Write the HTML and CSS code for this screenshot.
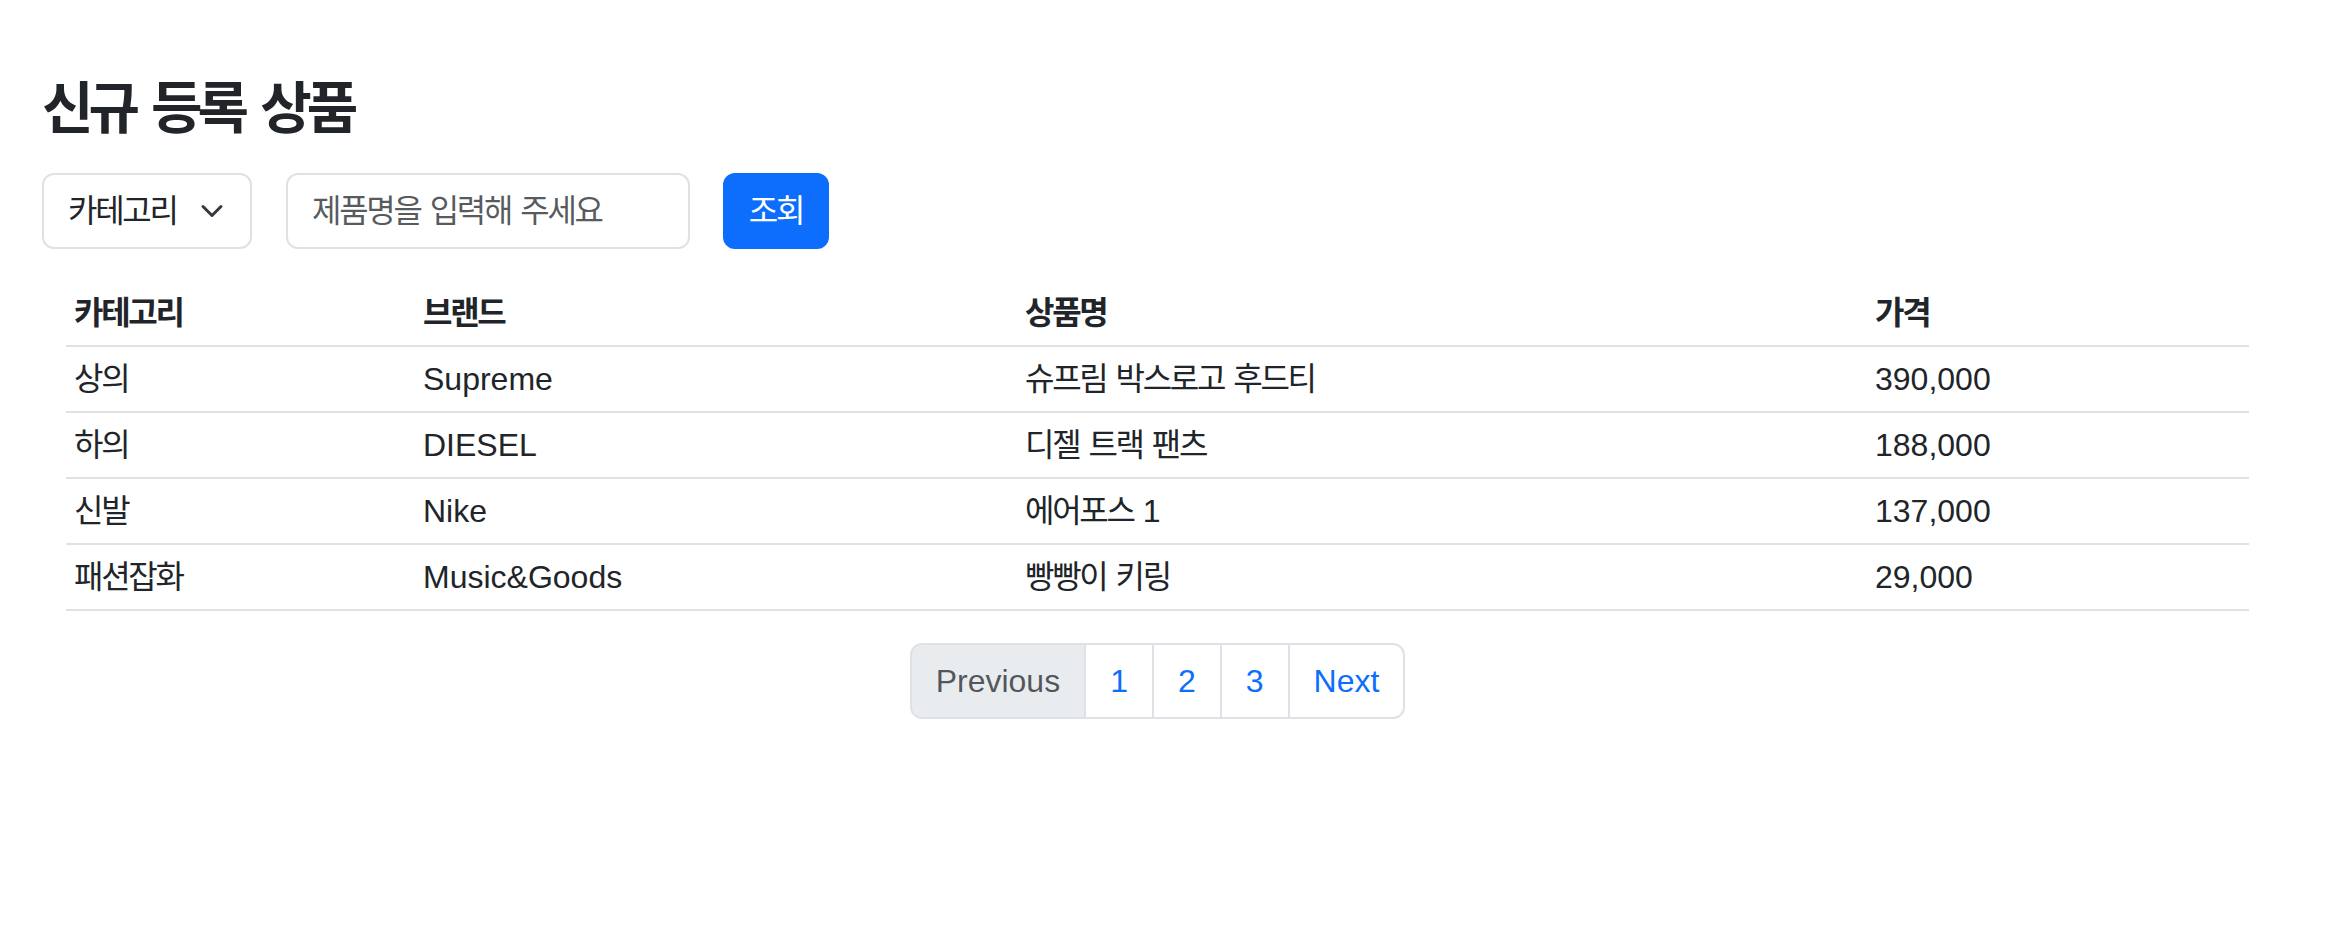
FILE: index.html
```html
<!DOCTYPE html>
<html lang="ko">
<head>
<meta charset="utf-8">
<title>신규 등록 상품</title>
<link rel="stylesheet" href="styles.css">
</head>
<body>
<main class="page">
  <h3 class="title ko">신규 등록 상품</h3>
  <form class="filters">
    <div class="select-wrap">
      <select class="select ko"><option>카테고리</option></select>
      <svg class="chevron" viewBox="0 0 16 16" width="32" height="24" preserveAspectRatio="xMidYMid meet"><path fill="none" stroke="#343a40" stroke-linecap="round" stroke-linejoin="round" stroke-width="2" d="m2 5 6 6 6-6"/></svg>
    </div>
    <input class="search ko" type="text" placeholder="제품명을 입력해 주세요">
    <button class="btn ko" type="button">조회</button>
  </form>
  <div class="table-wrap">
    <table class="table">
      <colgroup>
        <col class="c1"><col class="c2"><col class="c3"><col class="c4">
      </colgroup>
      <thead>
        <tr><th class="ko">카테고리</th><th class="ko">브랜드</th><th class="ko">상품명</th><th class="ko">가격</th></tr>
      </thead>
      <tbody>
        <tr><td class="ko">상의</td><td>Supreme</td><td class="ko">슈프림 박스로고 후드티</td><td>390,000</td></tr>
        <tr><td class="ko">하의</td><td>DIESEL</td><td class="ko">디젤 트랙 팬츠</td><td>188,000</td></tr>
        <tr><td class="ko">신발</td><td>Nike</td><td class="ko">에어포스 1</td><td>137,000</td></tr>
        <tr><td class="ko">패션잡화</td><td>Music&amp;Goods</td><td class="ko">빵빵이 키링</td><td>29,000</td></tr>
      </tbody>
    </table>
    <nav class="pager">
      <ul class="pagination">
        <li class="page-item disabled"><span class="page-link">Previous</span></li>
        <li class="page-item"><a class="page-link" href="#">1</a></li>
        <li class="page-item"><a class="page-link" href="#">2</a></li>
        <li class="page-item"><a class="page-link" href="#">3</a></li>
        <li class="page-item"><a class="page-link" href="#">Next</a></li>
      </ul>
    </nav>
  </div>
</main>
</body>
</html>
```
FILE: styles.css
```css
* { box-sizing: border-box; }

html, body {
  margin: 0;
  padding: 0;
  background: #fff;
}

body {
  font-family: "Liberation Sans", "Noto Sans CJK KR", sans-serif;
  font-size: 32px;
  line-height: 1.5;
  color: #212529;
}

.ko {
  letter-spacing: -0.072em;
  word-spacing: 0.08em;
}

.page {
  padding: 75px 42px 0 42px;
}

.title {
  margin: 0 0 31px 0;
  font-size: 56px;
  line-height: 1.2;
  font-weight: 700;
  color: #212529;
}

.title.ko {
  letter-spacing: -0.09em;
  word-spacing: 0.1em;
}

.filters {
  display: flex;
  align-items: center;
  margin: 0 0 32px 0;
}

.select-wrap {
  position: relative;
  width: 210px;
  height: 76px;
  margin-right: 34px;
}

.select {
  appearance: none;
  -webkit-appearance: none;
  width: 100%;
  height: 76px;
  padding: 12px 72px 12px 24px;
  font-family: inherit;
  font-size: 32px;
  line-height: 48px;
  color: #212529;
  background: #fff;
  border: 2px solid #dee2e6;
  border-radius: 12px;
}

.chevron {
  position: absolute;
  right: 24px;
  top: 26px;
  width: 32px;
  height: 24px;
}

.search {
  width: 404px;
  height: 76px;
  margin: 0 33px 0 0;
  padding: 12px 24px;
  font-family: inherit;
  font-size: 32px;
  line-height: 48px;
  color: #212529;
  background: #fff;
  border: 2px solid #dee2e6;
  border-radius: 12px;
  outline: none;
}

.search::placeholder {
  color: rgba(33, 37, 41, 0.75);
  letter-spacing: -0.072em;
  word-spacing: 0.08em;
}

.btn {
  width: 106px;
  height: 76px;
  padding: 12px 0;
  font-family: inherit;
  font-size: 32px;
  line-height: 48px;
  color: #fff;
  background: #0d6efd;
  border: 2px solid #0d6efd;
  border-radius: 12px;
  text-align: center;
}

.table-wrap {
  margin-left: 24px;
  width: 2183px;
}

.table {
  width: 100%;
  border-collapse: collapse;
  table-layout: fixed;
  margin: 0 0 32px 0;
  color: #212529;
}

.c1 { width: 349px; }
.c2 { width: 602px; }
.c3 { width: 850px; }
.c4 { width: 382px; }

.table th,
.table td {
  padding: 8px;
  text-align: left;
  vertical-align: top;
  line-height: 48px;
  border-bottom: 2px solid #dee2e6;
}

.table th {
  font-weight: 700;
}

.pager {
  display: flex;
  justify-content: center;
}

.pagination {
  display: flex;
  list-style: none;
  margin: 0;
  padding: 0;
}

.page-item + .page-item {
  margin-left: -2px;
}

.page-link {
  display: block;
  padding: 12px 24px;
  font-size: 32px;
  line-height: 48px;
  color: #0d6efd;
  text-decoration: none;
  background: #fff;
  border: 2px solid #dee2e6;
}

.page-item:first-child .page-link {
  border-radius: 12px 0 0 12px;
}

.page-item:last-child .page-link {
  border-radius: 0 12px 12px 0;
}

.page-item.disabled .page-link {
  color: rgba(33, 37, 41, 0.75);
  background: #e9ecef;
}
```
